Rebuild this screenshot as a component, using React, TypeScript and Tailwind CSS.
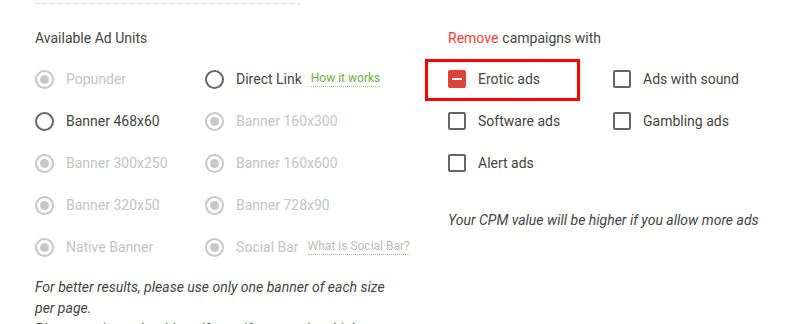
import type { ReactNode } from "react";

type Unit = {
  label: string;
  disabled?: boolean;
  extra?: ReactNode;
};

const leftUnits: Unit[] = [
  { label: "Popunder", disabled: true },
  { label: "Banner 468x60" },
  { label: "Banner 300x250", disabled: true },
  { label: "Banner 320x50", disabled: true },
  { label: "Native Banner", disabled: true },
];

const rightUnits: Unit[] = [
  {
    label: "Direct Link",
    extra: (
      <span className="ml-[9px] text-[12px] text-[#6ab04c] border-b border-dotted border-[#8fc97a] leading-[15px]">
        How it works
      </span>
    ),
  },
  { label: "Banner 160x300", disabled: true },
  { label: "Banner 160x600", disabled: true },
  { label: "Banner 728x90", disabled: true },
  {
    label: "Social Bar",
    disabled: true,
    extra: (
      <span className="ml-[9px] text-[12px] text-[#bdbdbd] border-b border-dotted border-[#8fc97a] leading-[15px]">
        What is Social Bar?
      </span>
    ),
  },
];

function Radio({ unit }: { unit: Unit }) {
  return (
    <div className="flex h-[42px] items-center">
      {unit.disabled ? (
        <span className="flex h-[19px] w-[19px] shrink-0 items-center justify-center rounded-full border-2 border-[#c8c8c8]">
          <span className="h-[9px] w-[9px] rounded-full bg-[#c8c8c8]" />
        </span>
      ) : (
        <span className="h-[19px] w-[19px] shrink-0 rounded-full border-2 border-[#666]" />
      )}
      <span className={`ml-[12px] ${unit.disabled ? "text-[#c4c4c4]" : "text-[#444]"}`}>
        {unit.label}
      </span>
      {unit.extra}
    </div>
  );
}

function Check({ label, checked }: { label: string; checked?: boolean }) {
  return (
    <div className="flex h-[42px] items-center">
      {checked ? (
        <span className="flex h-[18px] w-[18px] shrink-0 items-center justify-center rounded-[2px] bg-[#db4437]">
          <span className="h-[2px] w-[10px] bg-white" />
        </span>
      ) : (
        <span className="h-[18px] w-[18px] shrink-0 rounded-[2px] border-2 border-[#666]" />
      )}
      <span className="ml-[12px] text-[#444]">{label}</span>
    </div>
  );
}

export default function App() {
  return (
    <div
      className="h-[324px] w-[801px] overflow-hidden bg-white text-[14px]"
      style={{ fontFamily: "Roboto, 'Liberation Sans', sans-serif" }}
    >
      <div className="ml-[35px] mt-[3px] w-[265px] border-t border-dotted border-[#d0d0d0]" />

      <div className="flex pl-[35px]">
        {/* Left: ad units */}
        <div className="w-[413px]">
          <div className="flex h-[40px] items-center pt-[28px] text-[#444]">Available Ad Units</div>
          <div className="mt-[14px] flex">
            <div className="w-[170px]">
              {leftUnits.map((u) => (
                <Radio key={u.label} unit={u} />
              ))}
            </div>
            <div>
              {rightUnits.map((u) => (
                <Radio key={u.label} unit={u} />
              ))}
            </div>
          </div>
          <p className="mt-[9px] w-[360px] text-[14px] italic leading-[21px] text-[#444]">
            For better results, please use only one banner of each size per page.
            <br />
            Please put into ads with an iframe if you need multiple banners.
          </p>
        </div>

        {/* Right: remove campaigns */}
        <div className="flex-1">
          <div className="flex h-[40px] items-center pt-[28px] text-[#444]">
            <span className="text-[#f44336]">Remove</span>
            <span className="ml-[4px]">campaigns with</span>
          </div>
          <div className="mt-[14px] flex">
            <div className="w-[165px]">
              <div className="relative">
                <div className="absolute -left-[23px] top-[1px] h-[42px] w-[155px] border-[3px] border-[#ff0000]" />
                <Check label="Erotic ads" checked />
              </div>
              <Check label="Software ads" />
              <Check label="Alert ads" />
            </div>
            <div>
              <Check label="Ads with sound" />
              <Check label="Gambling ads" />
            </div>
          </div>
          <p className="mt-[26px] italic leading-[21px] text-[#444]">
            Your CPM value will be higher if you allow more ads
          </p>
        </div>
      </div>
    </div>
  );
}
